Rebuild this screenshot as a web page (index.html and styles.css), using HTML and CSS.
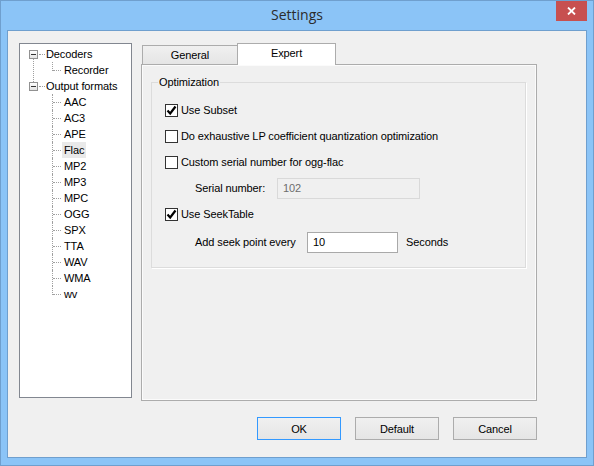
FILE: index.html
```html
<!DOCTYPE html>
<html lang="en">
<head>
    <meta charset="UTF-8">
    <title>Settings</title>
    <link rel="stylesheet" href="styles.css">
</head>
<body>
    <div class="window">
        <div class="titlebar">
            <span></span>
            <div class="title">Settings</div>
            <button class="close-btn" aria-label="Close">
                <svg width="9" height="8" viewBox="0 0 9 8"><path d="M1 0.5 L8 7.5 M8 0.5 L1 7.5" stroke="#fff" stroke-width="1.8" fill="none"/></svg>
            </button>
        </div>

        <div class="client">
            <div class="main">
                <div class="tree">
                    <div class="group">
                        <div class="node"><span class="expander"></span><span class="connector"></span><span class="label">Decoders</span></div>
                        <div class="children">
                            <div class="leaf"><span class="label">Recorder</span></div>
                        </div>
                    </div>
                    <div class="group">
                        <div class="node"><span class="expander"></span><span class="connector"></span><span class="label">Output formats</span></div>
                        <div class="children">
                            <div class="leaf"><span class="label">AAC</span></div>
                            <div class="leaf"><span class="label">AC3</span></div>
                            <div class="leaf"><span class="label">APE</span></div>
                            <div class="leaf"><span class="label selected">Flac</span></div>
                            <div class="leaf"><span class="label">MP2</span></div>
                            <div class="leaf"><span class="label">MP3</span></div>
                            <div class="leaf"><span class="label">MPC</span></div>
                            <div class="leaf"><span class="label">OGG</span></div>
                            <div class="leaf"><span class="label">SPX</span></div>
                            <div class="leaf"><span class="label">TTA</span></div>
                            <div class="leaf"><span class="label">WAV</span></div>
                            <div class="leaf"><span class="label">WMA</span></div>
                            <div class="leaf"><span class="label">wv</span></div>
                        </div>
                    </div>
                </div>

                <div class="tabs">
                    <div class="tab-strip">
                        <div class="tab">General</div>
                        <div class="tab active">Expert</div>
                    </div>
                    <div class="tab-pane">
                        <fieldset class="group-box">
                            <legend>Optimization</legend>

                            <label class="check-row">
                                <span class="checkbox"><svg width="11" height="11" viewBox="0 0 11 11"><path d="M1.5 5.5 L4.2 8.5 L9.5 1.5" stroke="#000" stroke-width="2.2" fill="none"/></svg></span>
                                Use Subset
                            </label>
                            <label class="check-row">
                                <span class="checkbox"></span>
                                Do exhaustive LP coefficient quantization optimization
                            </label>
                            <label class="check-row">
                                <span class="checkbox"></span>
                                Custom serial number for ogg-flac
                            </label>
                            <div class="field-row">
                                <span class="field-label serial-label">Serial number:</span>
                                <input class="text-input serial-input" type="text" value="102" disabled>
                            </div>
                            <label class="check-row">
                                <span class="checkbox"><svg width="11" height="11" viewBox="0 0 11 11"><path d="M1.5 5.5 L4.2 8.5 L9.5 1.5" stroke="#000" stroke-width="2.2" fill="none"/></svg></span>
                                Use SeekTable
                            </label>
                            <div class="field-row seek-row">
                                <span class="field-label seek-label">Add seek point every</span>
                                <input class="text-input seek-input" type="text" value="10">
                                <span class="unit">Seconds</span>
                            </div>
                        </fieldset>
                    </div>
                </div>
            </div>

            <div class="buttons">
                <button class="btn default-btn">OK</button>
                <button class="btn">Default</button>
                <button class="btn">Cancel</button>
            </div>
        </div>
    </div>
</body>
</html>
```

FILE: styles.css
```css
:root {
    --frame-color: #8bc4f7;
    --frame-edge: #6f9fce;
    --dialog-color: #f0f0f0;
    --text-color: #000000;
    --line-color: #a0a0a0;
}

* {
    margin: 0;
    padding: 0;
    box-sizing: border-box;
}

body {
    font-family: 'Liberation Sans', Arial, sans-serif;
    font-size: 11px;
    letter-spacing: -0.1px;
    color: var(--text-color);
    background-color: var(--frame-color);
}

.window {
    width: 594px;
    height: 466px;
    border: 1px solid var(--frame-edge);
    background-color: var(--frame-color);
    padding: 0 6px 7px;
    display: flex;
    flex-direction: column;
}

/* title bar */

.titlebar {
    height: 29px;
    display: grid;
    grid-template-columns: 31px 1fr 31px;
    align-items: start;
}

.title {
    font-family: 'Open Sans', 'Noto Sans', sans-serif;
    font-size: 14px;
    letter-spacing: 0;
    line-height: 27px;
    color: #2b2b2b;
    text-align: center;
}

.close-btn {
    width: 31px;
    height: 20px;
    border: none;
    background-color: #c75050;
    display: flex;
    align-items: center;
    justify-content: center;
}

/* client area */

.client {
    flex: 1;
    border: 1px solid var(--frame-edge);
    background-color: var(--dialog-color);
    padding: 12px 49px 0 11px;
}

.main {
    display: flex;
    align-items: flex-start;
    gap: 9px;
}

/* tree view */

.tree {
    width: 113px;
    height: 355px;
    border: 1px solid #828790;
    background-color: #ffffff;
    padding-top: 2px;
}

.group {
    position: relative;
}

.group:not(:last-child)::after {
    content: '';
    position: absolute;
    left: 13px;
    top: 13px;
    bottom: -4px;
    border-left: 1px dotted var(--line-color);
}

.node,
.leaf {
    height: 16px;
    display: flex;
    align-items: center;
    white-space: nowrap;
}

.expander {
    width: 9px;
    height: 9px;
    margin-left: 9px;
    border: 1px solid #919191;
    background: linear-gradient(#ffffff, #e3e3e3);
    position: relative;
}

.expander::before {
    content: '';
    position: absolute;
    left: 1px;
    top: 3px;
    width: 5px;
    height: 1px;
    background-color: #333333;
}

.connector {
    width: 6px;
    margin: 0 1px;
    border-top: 1px dotted var(--line-color);
}

.children {
    margin-left: 32px;
}

.leaf {
    position: relative;
    padding-left: 10px;
}

.leaf::before {
    content: '';
    position: absolute;
    left: 1px;
    top: 8px;
    width: 8px;
    border-top: 1px dotted var(--line-color);
}

.leaf::after {
    content: '';
    position: absolute;
    left: 0;
    top: 0;
    height: 16px;
    border-left: 1px dotted var(--line-color);
}

.leaf:last-child::after {
    height: 9px;
}

.leaf .label {
    padding: 0 2px;
    line-height: 16px;
}

.label.selected {
    background-color: #e9e9e9;
}

/* tabs */

.tabs {
    width: 396px;
}

.tab-strip {
    height: 21px;
    display: flex;
    align-items: flex-end;
    padding-left: 1px;
}

.tab {
    width: 96px;
    height: 19px;
    border: 1px solid #acacac;
    border-bottom: none;
    background: linear-gradient(#f0f0f0, #e5e5e5);
    text-align: center;
    line-height: 19px;
}

.tab.active {
    width: 99px;
    height: 22px;
    margin-left: -1px;
    margin-bottom: -1px;
    background: #ffffff;
    line-height: 19px;
    position: relative;
    z-index: 1;
}

.tab-pane {
    height: 337px;
    border: 1px solid #acacac;
    box-shadow: inset 0 0 0 1px #fbfbfb;
    background-color: var(--dialog-color);
    padding-top: 11px;
}

.group-box {
    margin: 0 10px 0 9px;
    border: 1px solid #dcdcdc;
    box-shadow: 1px 1px 0 #ffffff;
    padding: 8px 0 10px 0;
    min-width: 0;
}

.group-box legend {
    margin-left: 6px;
    padding: 0 1px;
    line-height: 13px;
}

.check-row {
    height: 26px;
    display: flex;
    align-items: center;
    padding-left: 13px;
}

.checkbox {
    width: 13px;
    height: 13px;
    border: 1px solid #333333;
    background-color: #ffffff;
    margin-right: 3px;
    display: flex;
    align-items: center;
    justify-content: center;
}

.field-row {
    height: 26px;
    display: flex;
    align-items: center;
    padding-left: 43px;
}

.seek-row {
    height: 30px;
}

.serial-label {
    width: 82px;
}

.seek-label {
    width: 112px;
}

.text-input {
    height: 21px;
    font: inherit;
    letter-spacing: inherit;
    padding: 0 5px;
    outline: none;
}

.serial-input {
    width: 143px;
    border: 1px solid #d9d9d9;
    background-color: var(--dialog-color);
    color: #6d6d6d;
}

.seek-input {
    width: 91px;
    border: 1px solid #a9a9a9;
    background-color: #ffffff;
    color: #000000;
}

.unit {
    margin-left: 8px;
}

/* dialog buttons */

.buttons {
    display: flex;
    justify-content: flex-end;
    gap: 14px;
    margin-top: 16px;
}

.btn {
    width: 84px;
    height: 23px;
    font: inherit;
    letter-spacing: inherit;
    color: #000000;
    border: 1px solid #acacac;
    background: linear-gradient(#f0f0f0, #e5e5e5);
}

.default-btn {
    border-color: #3399ff;
}
```
